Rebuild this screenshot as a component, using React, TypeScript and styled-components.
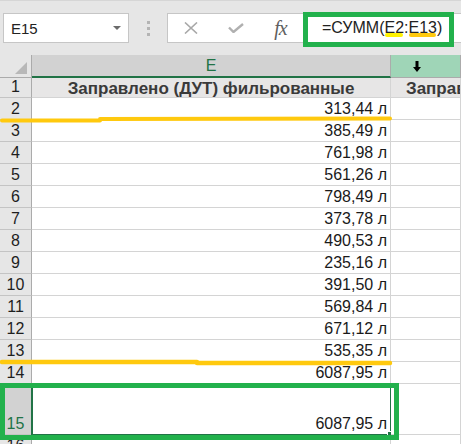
import styled, { createGlobalStyle } from "styled-components";

const GlobalStyle = createGlobalStyle`
  html, body {
    margin: 0;
    padding: 0;
    background: #ffffff;
  }
  body {
    font-family: "Liberation Sans", Arial, sans-serif;
    overflow: hidden;
  }
`;

const Page = styled.div`
  position: relative;
  width: 461px;
  height: 444px;
  overflow: hidden;
  background: #ffffff;
`;

const Toolbar = styled.div`
  height: 55px;
  box-sizing: border-box;
  background: #e6e6e6;
  border-top: 1px solid #d6d6d6;
  padding-top: 12px;
  display: flex;
  align-items: flex-start;
`;

const NameBox = styled.div`
  margin-left: 3px;
  width: 126px;
  height: 30px;
  box-sizing: border-box;
  background: #ffffff;
  border: 1px solid #c6c6c6;
  display: flex;
  align-items: center;
  justify-content: space-between;
  padding: 0 7px 0 7px;
  font-size: 15px;
  color: #222222;
`;

const Caret = styled.span`
  width: 0;
  height: 0;
  border-left: 4px solid transparent;
  border-right: 4px solid transparent;
  border-top: 4px solid #6b6b6b;
`;

const Grip = styled.div`
  width: 38px;
  height: 30px;
  display: flex;
  flex-direction: column;
  align-items: center;
  justify-content: center;
  gap: 3px;
`;

const GripDot = styled.span`
  width: 3px;
  height: 3px;
  background: #b4b4b4;
`;

const FormulaBar = styled.div`
  flex: 1;
  height: 30px;
  box-sizing: border-box;
  background: #ffffff;
  border: 1px solid #c6c6c6;
  border-right: none;
  display: flex;
  align-items: center;
`;

const BarButton = styled.div`
  width: 45px;
  height: 100%;
  display: flex;
  align-items: center;
  justify-content: center;
  color: #a8a8a8;
`;

const Fx = styled.span`
  font-family: "Liberation Serif", "Times New Roman", serif;
  font-style: italic;
  font-size: 20px;
  color: #606060;
  letter-spacing: -1px;
`;

const Formula = styled.div`
  padding-left: 19px;
  font-size: 16px;
  color: #222222;
  white-space: nowrap;
`;

const Mark = styled.span<{ $color: string }>`
  position: relative;
  &::after {
    content: "";
    position: absolute;
    left: 0;
    right: 1px;
    bottom: -1px;
    height: 4px;
    border-radius: 2px;
    background: ${(p) => p.$color};
  }
`;

const Sheet = styled.div`
  display: flex;
  flex-direction: column;
`;

const Row = styled.div<{ $h: number }>`
  display: grid;
  grid-template-columns: 32px 359px 1fr;
  height: ${(p) => p.$h}px;
`;

const Corner = styled.div`
  background: #e6e6e6;
  border-right: 1px solid #ababab;
  border-bottom: 1px solid #ababab;
  display: flex;
  align-items: flex-end;
  justify-content: flex-end;
  padding: 0 4px 3px 0;
`;

const ColHead = styled.div<{ $active?: boolean; $hover?: boolean }>`
  background: ${(p) => (p.$hover ? "#9fd5b7" : p.$active ? "#d2d2d2" : "#e6e6e6")};
  border-right: 1px solid #ababab;
  border-bottom: ${(p) => (p.$active ? "2px solid #217346" : "1px solid #ababab")};
  color: ${(p) => (p.$active ? "#217346" : "#222222")};
  font-size: 16px;
  display: flex;
  align-items: center;
  justify-content: center;
`;

const HoverHead = styled(ColHead)`
  justify-content: flex-start;
  padding-left: 22px;
`;

const RowHead = styled.div<{ $active?: boolean }>`
  background: ${(p) => (p.$active ? "#d2d2d2" : "#e6e6e6")};
  color: ${(p) => (p.$active ? "#217346" : "#1e1e1e")};
  border-right: 1px solid #ababab;
  border-bottom: 1px solid #c4c4c4;
  font-size: 16px;
  display: flex;
  align-items: flex-end;
  justify-content: center;
  padding-bottom: 1px;
  overflow: hidden;
`;

const Cell = styled.div<{ $fill?: boolean; $selected?: boolean }>`
  position: relative;
  background: ${(p) => (p.$fill ? "#e7e6e6" : "#ffffff")};
  border-right: 1px solid #d4d4d4;
  border-bottom: 1px solid #d4d4d4;
  display: flex;
  align-items: flex-end;
  justify-content: flex-end;
  padding: 0 3px 1px 0;
  font-size: 16px;
  color: #1a1a1a;
  white-space: nowrap;
  outline: ${(p) => (p.$selected ? "2px solid #217346" : "none")};
  outline-offset: -1px;
  overflow: ${(p) => (p.$selected ? "visible" : "hidden")};
  ${(p) =>
    p.$selected &&
    `
    &::after {
      content: "";
      position: absolute;
      right: -4px;
      bottom: -4px;
      width: 5px;
      height: 5px;
      background: #217346;
      border: 1px solid #ffffff;
    }
  `}
`;

const Title = styled(Cell)`
  justify-content: center;
  align-items: center;
  font-weight: bold;
  font-size: 17px;
  line-height: 1;
  color: #3a3a3a;
  padding: 1px 0 0 0;
`;

const TitleOverflow = styled(Title)`
  justify-content: flex-start;
  padding-left: 15px;
`;

const Annotations = styled.svg`
  position: absolute;
  left: 0;
  top: 0;
  pointer-events: none;
`;

const GreenBox = styled.div<{ $x: number; $y: number; $w: number; $h: number }>`
  position: absolute;
  left: ${(p) => p.$x}px;
  top: ${(p) => p.$y}px;
  width: ${(p) => p.$w}px;
  height: ${(p) => p.$h}px;
  box-sizing: border-box;
  border: 5px solid #22b14c;
  pointer-events: none;
`;

const values = [
  "313,44 л",
  "385,49 л",
  "761,98 л",
  "561,26 л",
  "798,49 л",
  "373,78 л",
  "490,53 л",
  "235,16 л",
  "391,50 л",
  "569,84 л",
  "671,12 л",
  "535,35 л",
  "6087,95 л",
];

const App = () => {
  return (
    <Page>
      <GlobalStyle />
      <Toolbar>
        <NameBox>
          E15
          <Caret />
        </NameBox>
        <Grip>
          <GripDot />
          <GripDot />
          <GripDot />
        </Grip>
        <FormulaBar>
          <BarButton>
            <svg width="14" height="12" viewBox="0 0 14 12">
              <path d="M1 0.5 L13 11.5 M13 0.5 L1 11.5" stroke="#a8a8a8" strokeWidth="1.6" fill="none" />
            </svg>
          </BarButton>
          <BarButton>
            <svg width="16" height="10" viewBox="0 0 16 10">
              <path d="M1 4.5 L5.5 9 L15 1" stroke="#b0b0b0" strokeWidth="2.4" fill="none" />
            </svg>
          </BarButton>
          <BarButton>
            <Fx>fx</Fx>
          </BarButton>
          <Formula>
            =СУММ(<Mark $color="#fff200">E2</Mark>:<Mark $color="#ffc90e">E13</Mark>)
          </Formula>
        </FormulaBar>
      </Toolbar>

      <Sheet>
        <Row $h={23}>
          <Corner>
            <svg width="12" height="12" viewBox="0 0 12 12">
              <path d="M12 0 L12 12 L0 12 Z" fill="#b8b8b8" />
            </svg>
          </Corner>
          <ColHead $active>E</ColHead>
          <HoverHead $hover>
            <svg width="8" height="11" viewBox="0 0 8 11">
              <path d="M2.5 0 H5.5 V6 H8 L4 11 L0 6 H2.5 Z" fill="#000000" />
            </svg>
          </HoverHead>
        </Row>
        <Row $h={20}>
          <RowHead>1</RowHead>
          <Title $fill>Заправлено (ДУТ) фильрованные</Title>
          <TitleOverflow $fill>Заправлено (ДУТ)</TitleOverflow>
        </Row>
        {values.map((v, i) => (
          <Row $h={22} key={i}>
            <RowHead>{i + 2}</RowHead>
            <Cell>{v}</Cell>
            <Cell />
          </Row>
        ))}
        <Row $h={51}>
          <RowHead $active>15</RowHead>
          <Cell $selected>6087,95 л</Cell>
          <Cell />
        </Row>
        <Row $h={22}>
          <RowHead>16</RowHead>
          <Cell />
          <Cell />
        </Row>
      </Sheet>

      <Annotations width="461" height="444" viewBox="0 0 461 444">
        <path
          d="M2 120.5 L100 120.5 M100 119 L390 118.5"
          stroke="#ffc90e"
          strokeWidth="4"
          strokeLinecap="round"
          fill="none"
        />
        <path
          d="M2 362 L197 362 M197 363 L390 363"
          stroke="#ffc90e"
          strokeWidth="4.5"
          strokeLinecap="round"
          fill="none"
        />
      </Annotations>
      <GreenBox $x={303} $y={12} $w={151} $h={35} />
      <GreenBox $x={0} $y={383} $w={399} $h={57} />
    </Page>
  );
};

export default App;
